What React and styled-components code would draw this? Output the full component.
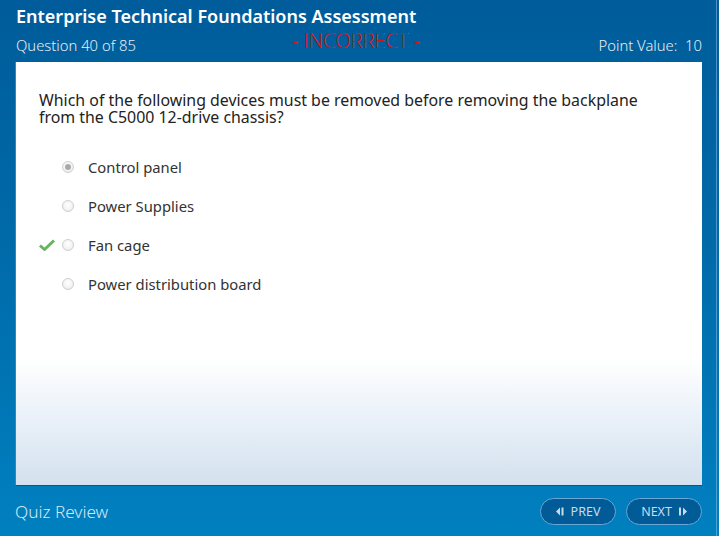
import React from "react";
import styled, { createGlobalStyle } from "styled-components";

const Global = createGlobalStyle`
  html, body { margin: 0; padding: 0; }
  body { font-family: "Noto Sans", "Open Sans", sans-serif; }
`;

const Page = styled.div`
  width: 719px;
  height: 536px;
  background: linear-gradient(to bottom, #005c9a 0%, #006aa9 45%, #0080c0 100%);
  display: flex;
  overflow: hidden;
`;

const Window = styled.div`
  width: 716px;
  border-right: 1px solid rgba(140, 190, 230, 0.55);
  display: flex;
  flex-direction: column;
`;

const Header = styled.div`
  padding: 5px 16px 0 16px;
  color: #fff;
`;

const Title = styled.h1`
  margin: 0;
  font-size: 18px;
  font-weight: 600;
  line-height: 23px;
`;

const SubRow = styled.div`
  display: flex;
  align-items: center;
  height: 34px;
  font-size: 14.8px;
  font-weight: 300;
  color: #e6eef5;
  padding-bottom: 1px;
  box-sizing: border-box;
  white-space: nowrap;
`;

const Counter = styled.span`
  width: 276px;
`;

const Status = styled.span`
  font-family: "Open Sans", "Noto Sans", sans-serif;
  color: #e01010;
  font-size: 20px;
  font-weight: 300;
  margin-top: -8px;
`;

const Dash = styled.span`
  font-weight: 400;
`;

const Right = styled.span`
  margin-left: auto;
  margin-right: -2px;
`;

const Panel = styled.div`
  margin: 0 14px 0 15px;
  height: 424px;
  box-sizing: border-box;
  background: linear-gradient(to bottom, #ffffff 0%, #ffffff 70%, #edf3fa 82%, #d3e1ee 100%);
  border-left: 1px solid #4d7ea8;
  border-bottom: 1px solid #1c4f7e;
  padding: 30px 24px 0 23px;
  color: #222;
`;

const Question = styled.p`
  margin: 0;
  font-size: 15.9px;
  line-height: 17px;
`;

const Options = styled.ul`
  list-style: none;
  margin: 21px 0 0 0;
  padding: 0;
`;

const Option = styled.li`
  display: flex;
  align-items: center;
  height: 39px;
  font-size: 14.8px;
  color: #333;
`;

const Mark = styled.span`
  width: 23px;
  display: flex;
  align-items: center;
  justify-content: flex-start;
`;

const Radio = styled.span`
  width: 12px;
  height: 12px;
  border-radius: 50%;
  box-sizing: border-box;
  border: 1px solid #cfcfcf;
  background: radial-gradient(circle at 50% 40%, #ffffff 0%, #f3f3f3 60%, #e2e2e2 100%);
  margin-right: 14px;
  display: flex;
  align-items: center;
  justify-content: center;
  &::after {
    content: "";
    width: 6px;
    height: 6px;
    border-radius: 50%;
    background: ${(p) => (p.$checked ? "#a9a9a9" : "transparent")};
  }
`;

const Footer = styled.div`
  flex: 1;
  display: flex;
  align-items: center;
  justify-content: space-between;
  padding: 0 0 0 15px;
`;

const FooterLabel = styled.span`
  color: #d4e6f4;
  font-size: 17.2px;
  font-weight: 300;
`;

const Nav = styled.div`
  display: flex;
  gap: 10px;
  margin-right: 14px;
  margin-top: 1px;
`;

const NavButton = styled.button`
  width: 76px;
  height: 27px;
  border-radius: 14px;
  border: 1px solid #6aa6d6;
  background: #005b96;
  color: #c9dcec;
  font-family: "Noto Sans", sans-serif;
  font-size: 12.5px;
  display: flex;
  align-items: center;
  justify-content: center;
  gap: 6px;
  padding: 0;
`;

const Check = () => (
  <svg width="16" height="12" viewBox="0 0 16 12">
    <path d="M1 6.5 L5.5 10.5 L15 1.5" fill="none" stroke="#67b45f" strokeWidth="3" strokeLinejoin="round" />
  </svg>
);

const PrevIcon = () => (
  <svg width="9" height="9" viewBox="0 0 9 9">
    <path d="M0 4.5 L4 0.5 V8.5 Z" fill="#c9dcec" />
    <rect x="5.5" y="0.5" width="2" height="8" fill="#c9dcec" />
  </svg>
);

const NextIcon = () => (
  <svg width="9" height="9" viewBox="0 0 9 9">
    <rect x="1" y="0.5" width="2" height="8" fill="#c9dcec" />
    <path d="M9 4.5 L5 0.5 V8.5 Z" fill="#c9dcec" />
  </svg>
);

const options = [
  { label: "Control panel", checked: true },
  { label: "Power Supplies" },
  { label: "Fan cage", correct: true },
  { label: "Power distribution board" },
];

export default function App() {
  return (
    <>
      <Global />
      <Page>
        <Window>
          <Header>
            <Title>Enterprise Technical Foundations Assessment</Title>
            <SubRow>
              <Counter>Question 40 of 85</Counter>
              <Status>
                <Dash>-</Dash> INCORRECT <Dash>-</Dash>
              </Status>
              <Right>Point Value:&nbsp; 10</Right>
            </SubRow>
          </Header>
          <Panel>
            <Question>
              Which of the following devices must be removed before removing the backplane
              <br />
              from the C5000 12-drive chassis?
            </Question>
            <Options>
              {options.map((o) => (
                <Option key={o.label}>
                  <Mark>{o.correct && <Check />}</Mark>
                  <Radio $checked={o.checked} />
                  {o.label}
                </Option>
              ))}
            </Options>
          </Panel>
          <Footer>
            <FooterLabel>Quiz Review</FooterLabel>
            <Nav>
              <NavButton>
                <PrevIcon />
                PREV
              </NavButton>
              <NavButton>
                NEXT
                <NextIcon />
              </NavButton>
            </Nav>
          </Footer>
        </Window>
      </Page>
    </>
  );
}
